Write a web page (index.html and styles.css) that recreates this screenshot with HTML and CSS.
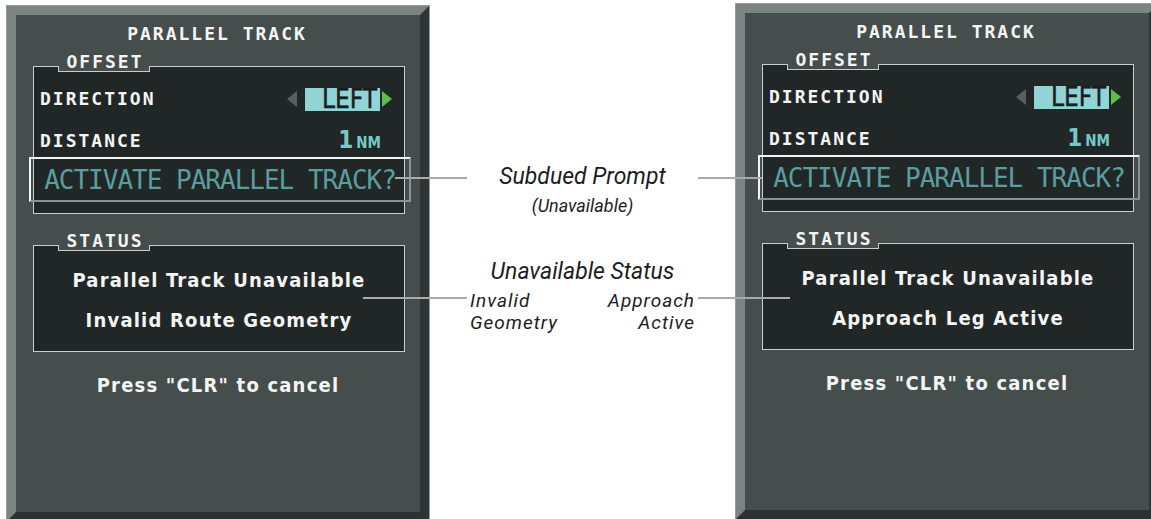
FILE: index.html
```html
<!DOCTYPE html>
<html lang="en">
<head>
  <meta charset="UTF-8" />
  <meta name="viewport" content="width=device-width, initial-scale=1.0" />
  <title>Parallel Track - Unavailable</title>
  <link rel="stylesheet" href="styles.css">
</head>
<body>
  <div class="stage">
    <div class="panel panel-left">
      <div class="title">PARALLEL TRACK</div>
      <div class="group offset">
        <span class="tab">OFFSET</span>
        <div class="row">
          <span class="label">DIRECTION</span>
          <span class="value">
            <span class="arrow arrow-left"></span>
            <span class="field">LEFT</span>
            <span class="arrow arrow-right"></span>
          </span>
        </div>
        <div class="row">
          <span class="label">DISTANCE</span>
          <span class="dist"><span class="big">1</span><span class="unit">NM</span></span>
        </div>
        <div class="prompt"><span class="dots">ACTIVATE PARALLEL TRACK?</span></div>
      </div>
      <div class="group status">
        <span class="tab">STATUS</span>
        <div class="msg">Parallel Track Unavailable</div>
        <div class="msg">Invalid Route Geometry</div>
      </div>
      <div class="hint">Press "CLR" to cancel</div>
    </div>

    <div class="notes">
      <div class="note-title">Subdued Prompt</div>
      <div class="note-sub">(Unavailable)</div>
      <div class="note-title note-status">Unavailable Status</div>
      <div class="note-pair">
        <div>Invalid<br>Geometry</div>
        <div class="note-right">Approach<br>Active</div>
      </div>
    </div>

    <div class="panel panel-right">
      <div class="title">PARALLEL TRACK</div>
      <div class="group offset">
        <span class="tab">OFFSET</span>
        <div class="row">
          <span class="label">DIRECTION</span>
          <span class="value">
            <span class="arrow arrow-left"></span>
            <span class="field">LEFT</span>
            <span class="arrow arrow-right"></span>
          </span>
        </div>
        <div class="row">
          <span class="label">DISTANCE</span>
          <span class="dist"><span class="big">1</span><span class="unit">NM</span></span>
        </div>
        <div class="prompt"><span class="dots">ACTIVATE PARALLEL TRACK?</span></div>
      </div>
      <div class="group status">
        <span class="tab">STATUS</span>
        <div class="msg">Parallel Track Unavailable</div>
        <div class="msg">Approach Leg Active</div>
      </div>
      <div class="hint">Press "CLR" to cancel</div>
    </div>

    <!-- callout leader lines -->
    <div class="leader leader-a"></div>
    <div class="leader leader-b"></div>
    <div class="leader leader-c"></div>
    <div class="leader leader-d"></div>
  </div>
</body>
</html>
```

FILE: styles.css
```css
body {
  margin: 0;
  background: #fff;
  overflow: hidden;
}
.stage {
  position: relative;
  display: flex;
  align-items: flex-start;
  padding-left: 6px;
  height: 519px;
  overflow: hidden;
}

/* bezel panel */
.panel {
  flex: 0 0 424px;
  box-sizing: border-box;
  height: 517px;
  padding-top: 9px;
  border: 10px solid;
  border-color: #7b8383 #2f3535 #2c3232 #7b8383;
  outline: 1px solid #969c9c;
  outline-offset: -1px;
  background: #464d4d;
  color: #f4f4f4;
  font-family: "DejaVu Sans Mono", monospace;
}
.panel-left {
  margin-top: 5px;
}
.panel-right {
  margin-top: 3px;
}
.title {
  font-weight: bold;
  font-size: 18px;
  line-height: 20px;
  letter-spacing: 2px;
  text-align: center;
  padding-right: 2px;
}

/* group boxes */
.group {
  position: relative;
  margin: 22px 15px 0 17px;
  border: 1px solid #c9cdcd;
  background: #212727;
}
.tab {
  position: absolute;
  top: -16px;
  left: 24px;
  width: 92px;
  height: 21px;
  box-sizing: border-box;
  padding-top: 1px;
  padding-left: 2px;
  background: #464d4d;
  text-align: center;
  font-weight: bold;
  font-size: 18px;
  line-height: 20px;
  letter-spacing: 2px;
}
.tab::after {
  content: "";
  position: absolute;
  left: 0;
  right: 0;
  bottom: 0;
  height: 6px;
  box-sizing: border-box;
  border: 1px solid #c9cdcd;
  border-top: none;
}
.offset {
  padding: 19px 0 11px;
}
.row {
  display: flex;
  align-items: center;
  justify-content: space-between;
  height: 26px;
  padding: 0 12px 0 6px;
}
.row + .row {
  margin-top: 16px;
}
.label {
  font-weight: bold;
  font-size: 18px;
  line-height: 26px;
  letter-spacing: 2px;
}
.value {
  display: flex;
  align-items: center;
}
.arrow {
  width: 0;
  height: 0;
  border-style: solid;
}
.arrow-left {
  border-width: 8.5px 10px 8.5px 0;
  border-color: transparent #596060 transparent transparent;
  margin-right: 8px;
}
.arrow-right {
  border-width: 8.5px 0 8.5px 10px;
  border-color: transparent transparent transparent #5dbf4b;
  margin-left: 2px;
}
.field {
  width: 75px;
  height: 23px;
  box-sizing: border-box;
  padding-right: 3px;
  background: #92d3d5;
  color: #172020;
  text-align: right;
  font-family: "DejaVu Sans Condensed", "DejaVu Sans", sans-serif;
  font-stretch: condensed;
  font-size: 26px;
  line-height: 23px;
  -webkit-text-stroke: 0.4px #172020;
}
.dist {
  margin-right: 11px;
  color: #74c9ca;
  font-family: "DejaVu Sans Condensed", "DejaVu Sans", sans-serif;
  font-stretch: condensed;
  font-weight: bold;
  line-height: 26px;
}
.dist .big {
  font-size: 24px;
  margin-right: 3px;
}
.dist .unit {
  font-size: 15px;
}
.prompt {
  height: 45px;
  box-sizing: border-box;
  margin: 3px -7px 0 -5px;
  padding-top: 1px;
  border: 2px solid;
  border-color: #f2f4f4 #8c9292 #8c9292 #f2f4f4;
  text-align: center;
  line-height: 40px;
}
.dots {
  font-size: 26px;
  letter-spacing: -1px;
  color: #5b9d9e;
}
.status {
  margin-top: 31px;
  padding: 14px 0 11px;
}
.msg, .hint {
  text-align: center;
  font-family: "DejaVu Sans Condensed", "DejaVu Sans", sans-serif;
  font-stretch: condensed;
  font-weight: bold;
  font-size: 20px;
  letter-spacing: 1.2px;
}
.msg {
  line-height: 40px;
}
.hint {
  margin-top: 21px;
  line-height: 24px;
}

/* annotations between the panels */
.notes {
  flex: 0 0 305px;
  display: flex;
  flex-direction: column;
  align-items: center;
  padding-top: 164px;
  color: #1d1d1d;
  font-family: Roboto, "Noto Sans", sans-serif;
  font-style: italic;
}
.note-title {
  font-size: 23px;
  line-height: 26px;
}
.note-sub {
  margin-top: 5px;
  font-size: 18px;
  line-height: 21px;
}
.note-status {
  margin-top: 43px;
}
.note-pair {
  align-self: stretch;
  display: flex;
  justify-content: space-between;
  margin-top: 5px;
  padding: 0 40px;
  font-size: 19px;
  line-height: 22px;
  letter-spacing: 1px;
}
.note-right {
  text-align: right;
}
.leader {
  position: absolute;
  height: 2px;
  background: #a9aaaa;
}
.leader-a {
  left: 395px;
  top: 177px;
  width: 72px;
}
.leader-b {
  left: 698px;
  top: 177px;
  width: 64px;
}
.leader-c {
  left: 363px;
  top: 297px;
  width: 104px;
}
.leader-d {
  left: 698px;
  top: 297px;
  width: 92px;
}
```
